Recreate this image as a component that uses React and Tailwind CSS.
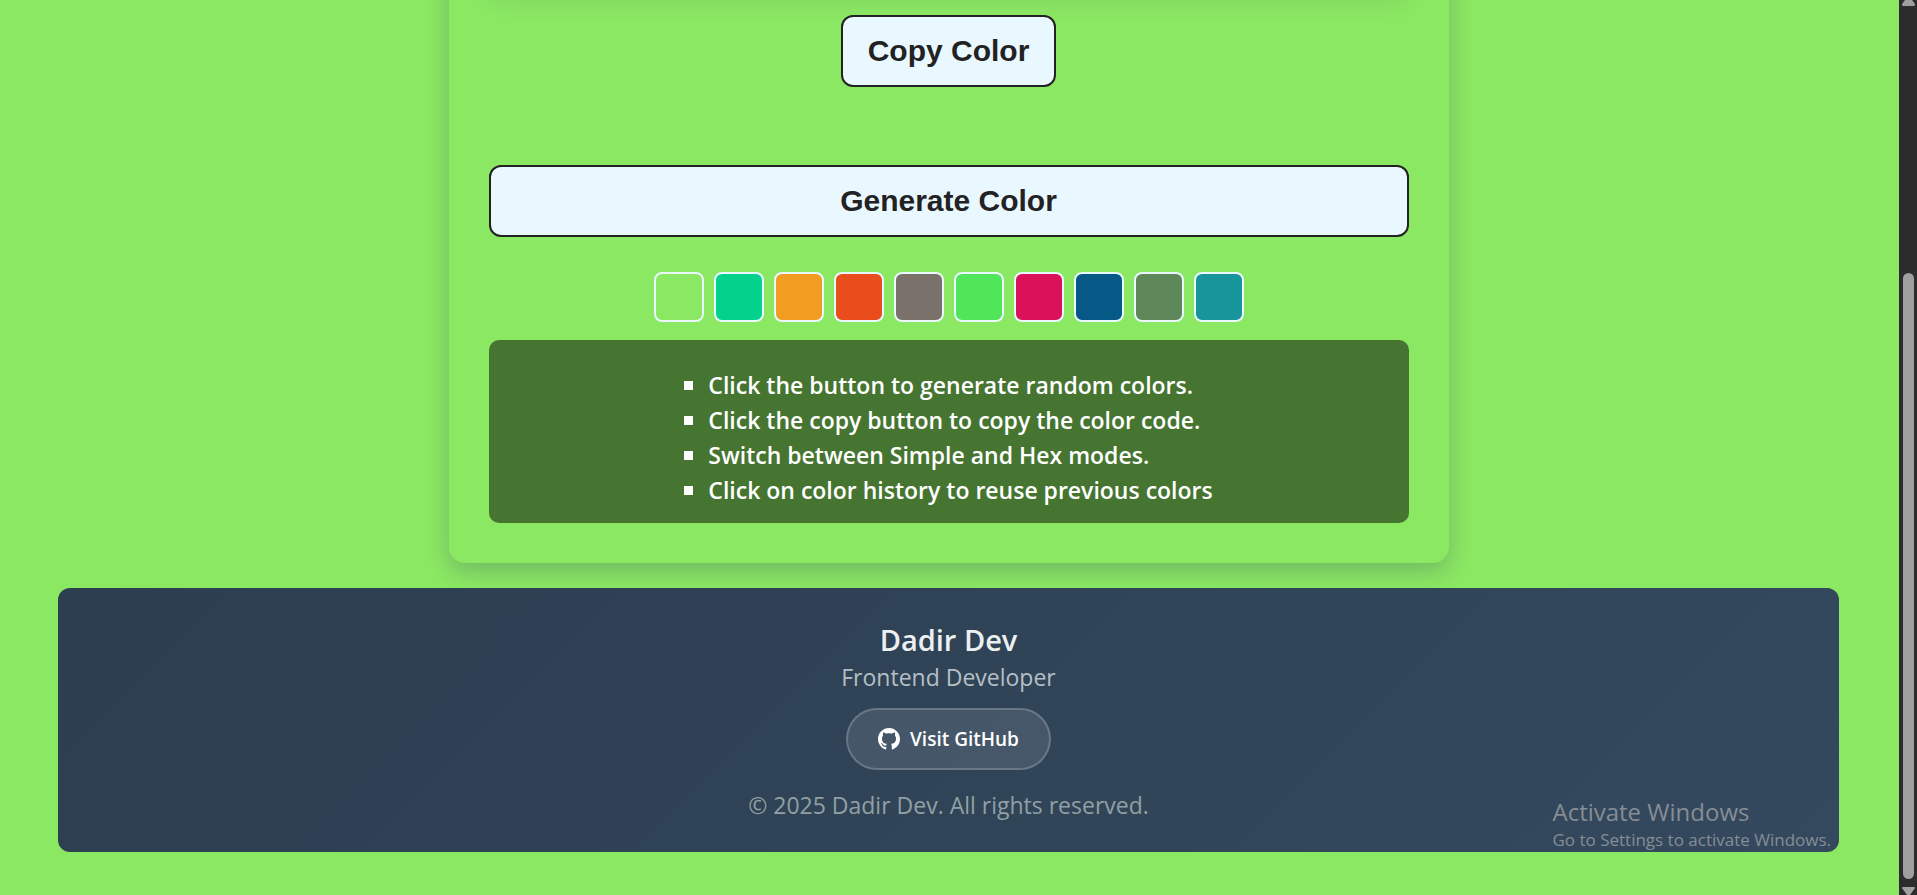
const swatches = [
  { name: "Light green", color: "bg-[#8be862]" },
  { name: "Emerald", color: "bg-[#03d28d]" },
  { name: "Orange", color: "bg-[#f19d22]" },
  { name: "Vermilion", color: "bg-[#ea4d1c]" },
  { name: "Taupe", color: "bg-[#7a716b]" },
  { name: "Green", color: "bg-[#51e65a]" },
  { name: "Crimson", color: "bg-[#db1159]" },
  { name: "Navy", color: "bg-[#065986]" },
  { name: "Moss", color: "bg-[#5e885a]" },
  { name: "Teal", color: "bg-[#18949b]" },
];

const tips = [
  "Click the button to generate random colors.",
  "Click the copy button to copy the color code.",
  "Switch between Simple and Hex modes.",
  "Click on color history to reuse previous colors",
];

const buttonClass =
  "rounded-xl border-2 border-[#222222] bg-[#e9f7ff] px-[25px] py-4 font-['Liberation_Sans',Arial,sans-serif] text-[30px] leading-9 font-bold text-[#222222]";

function GitHubIcon() {
  return (
    <svg viewBox="0 0 24 24" className="size-[22px]" fill="currentColor" aria-hidden="true">
      <path d="M12 0c-6.626 0-12 5.373-12 12 0 5.302 3.438 9.8 8.207 11.387.599.111.793-.261.793-.577v-2.234c-3.338.726-4.033-1.416-4.033-1.416-.546-1.387-1.333-1.756-1.333-1.756-1.089-.745.083-.729.083-.729 1.205.084 1.839 1.237 1.839 1.237 1.07 1.834 2.807 1.304 3.492.997.107-.775.418-1.305.762-1.604-2.665-.305-5.467-1.334-5.467-5.931 0-1.311.469-2.381 1.236-3.221-.124-.303-.535-1.524.117-3.176 0 0 1.008-.322 3.301 1.23.957-.266 1.983-.399 3.003-.404 1.02.005 2.047.138 3.006.404 2.291-1.552 3.297-1.23 3.297-1.23.653 1.653.242 2.874.118 3.176.77.84 1.235 1.911 1.235 3.221 0 4.609-2.807 5.624-5.479 5.921.43.372.823 1.102.823 2.222v3.293c0 .319.192.694.801.576 4.765-1.589 8.199-6.086 8.199-11.386 0-6.627-5.373-12-12-12z" />
    </svg>
  );
}

function ColorCard() {
  return (
    <section className="-mt-12 flex w-full max-w-[1000px] flex-col rounded-2xl px-10 pb-10 shadow-[0_8px_22px_rgba(31,38,110,0.24)]">
      <div className="h-10 w-full rounded-xl shadow-[0_8px_24px_rgba(31,38,110,0.1)]" />
      <button type="button" className={`${buttonClass} mt-[23px] self-center`}>
        Copy Color
      </button>
      <button type="button" className={`${buttonClass} mt-[78px] w-full`}>
        Generate Color
      </button>
      <div className="mt-[35px] flex flex-wrap justify-center gap-2.5">
        {swatches.map((s) => (
          <button
            key={s.name}
            type="button"
            aria-label={s.name}
            className={`size-[50px] rounded-lg border-2 border-[#e9f7ff] ${s.color}`}
          />
        ))}
      </div>
      <div className="mt-[18px] flex justify-center rounded-[10px] bg-[#457531] pt-7 pb-[15px]">
        <ul className="text-[23px] leading-[35px] font-semibold text-white">
          {tips.map((tip) => (
            <li key={tip} className="flex items-center gap-[15px]">
              <span className="size-[9px] bg-white" />
              {tip}
            </li>
          ))}
        </ul>
      </div>
    </section>
  );
}

function Footer() {
  return (
    <footer className="relative mt-[25px] flex w-full flex-col items-center rounded-xl bg-linear-135 from-[#2c3e50] to-[#34495e] pt-8 pb-[31px]">
      <h3 className="text-[29px] leading-10 font-semibold text-[#ecf0f1]">Dadir Dev</h3>
      <p className="text-[23px] leading-[34px] text-[#b4bfc5]">Frontend Developer</p>
      <a
        href="https://github.com/"
        className="mt-3.5 flex items-center gap-2.5 rounded-full border-2 border-white/20 bg-white/10 px-[30px] py-[15px] text-[19px] leading-7 font-semibold text-white"
      >
        <GitHubIcon />
        Visit GitHub
      </a>
      <p className="mt-[19px] text-[23px] leading-8 text-[#90a0a3]">© 2025 Dadir Dev. All rights reserved.</p>
      <div className="absolute right-2 bottom-0 text-[#858d95]">
        <p className="text-[24px] leading-8">Activate Windows</p>
        <p className="text-[17px] leading-6">Go to Settings to activate Windows.</p>
      </div>
    </footer>
  );
}

function ScrollTrack() {
  return (
    <div className="flex w-[18px] shrink-0 flex-col items-center bg-[#2c2c2c]" aria-hidden="true">
      <svg className="h-1.5 w-[13px]" viewBox="0 0 13 6" fill="#9f9f9f">
        <path d="M3 0h7l3 4q0 2-1 2H1Q0 6 0 4z" />
      </svg>
      <div className="mt-[267px] mb-2 w-[11px] flex-1 rounded-full bg-[#9f9f9f]" />
      <svg className="h-2 w-[13px]" viewBox="0 0 13 8" fill="#9f9f9f">
        <path d="M1 0h11q1 0 1 1L8 8H5L0 1Q0 0 1 0z" />
      </svg>
    </div>
  );
}

export default function App() {
  return (
    <div className="flex h-screen overflow-hidden bg-[#8be862] font-['Open_Sans','Noto_Sans',sans-serif]">
      <main className="flex min-w-0 flex-1 flex-col items-center pr-[60px] pl-[58px]">
        <ColorCard />
        <Footer />
      </main>
      <ScrollTrack />
    </div>
  );
}
